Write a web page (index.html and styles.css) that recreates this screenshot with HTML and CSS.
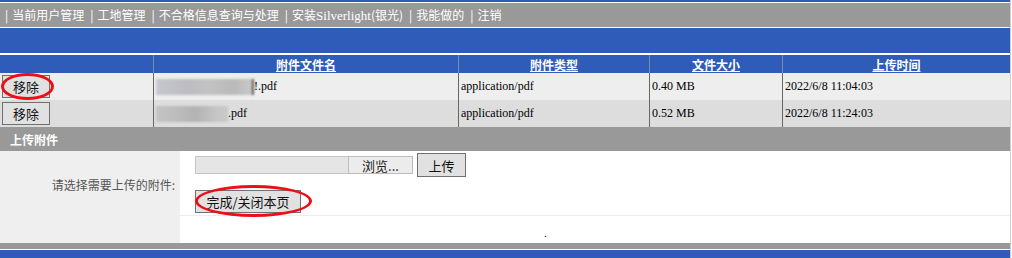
FILE: index.html
```html
<!DOCTYPE html>
<html lang="zh-CN">
<head>
<meta charset="utf-8">
<title>附件管理</title>
<link rel="stylesheet" href="styles.css">
</head>
<body>
<div class="page">
  <div class="topline"></div>
  <nav class="nav">
    <span class="item"><span class="sep">|</span>当前用户管理</span>
    <span class="item"><span class="sep">|</span>工地管理</span>
    <span class="item"><span class="sep">|</span>不合格信息查询与处理</span>
    <span class="item"><span class="sep">|</span>安装<span class="latin">Silverlight</span>(银光)</span>
    <span class="item"><span class="sep">|</span>我能做的</span>
    <span class="item"><span class="sep">|</span>注销</span>
  </nav>
  <div class="banner"></div>

  <div class="files">
    <div class="th"></div>
    <div class="th col"><a>附件文件名</a></div>
    <div class="th col"><a>附件类型</a></div>
    <div class="th col"><a>文件大小</a></div>
    <div class="th col"><a>上传时间</a></div>

    <div class="td r1"><button class="btn rm">移除</button></div>
    <div class="td r1 col"><span class="blur b1"></span>!.pdf</div>
    <div class="td r1 col">application/pdf</div>
    <div class="td r1 col">0.40 MB</div>
    <div class="td r1 col">2022/6/8 11:04:03</div>

    <div class="td r2"><button class="btn rm">移除</button></div>
    <div class="td r2 col"><span class="blur b2"></span>.pdf</div>
    <div class="td r2 col">application/pdf</div>
    <div class="td r2 col">0.52 MB</div>
    <div class="td r2 col">2022/6/8 11:24:03</div>
  </div>

  <div class="section-title">上传附件</div>

  <div class="upload">
    <div class="label">请选择需要上传的附件:</div>
    <div class="controls">
      <div class="filerow">
        <span class="filebox"></span><span class="browse">浏览...</span>
        <button class="btn up">上传</button>
      </div>
      <button class="btn done">完成/关闭本页</button>
    </div>
    <div class="label-empty"></div>
    <div class="extra"><span class="dot">.</span></div>
  </div>

  <div class="footgray"></div>
  <div class="footblue"></div>

  <div class="mark m1"></div>
  <div class="mark m2"></div>
</div>
</body>
</html>
```

FILE: styles.css
```css
* { box-sizing: border-box; }
html, body { margin: 0; padding: 0; background: #fff; }
body { font-family: "Noto Sans CJK SC", "Noto Sans", sans-serif; font-size: 12px; color: #000; }

.page { position: relative; width: 1011px; height: 258px; overflow: hidden; border-right: 1px solid #d0d0d0; }

.topline { height: 2px; background: #2f5cb8; margin-bottom: 1px; }

.nav {
  height: 24px; background: #999; margin-bottom: 1px;
  display: flex; align-items: center; padding-left: 5px;
  color: #fff; font-size: 12px; line-height: 1;
}
.nav .item { display: inline-flex; align-items: center; margin-right: 6px; }
.nav .sep { margin-right: 4px; }
.nav .latin { font-family: "Liberation Serif", serif; font-size: 13px; }

.banner { height: 25px; background: #2f5cb8; margin-bottom: 2px; }

.files {
  display: grid;
  grid-template-columns: 153px 305px 191px 133px 1fr;
  grid-template-rows: 18px 27px 27px;
}
.th {
  background: #2f5cb8; color: #fff; font-weight: bold;
  display: flex; align-items: center; justify-content: center;
}
.th a { text-decoration: underline; }
.col { border-left: 1px solid #666; }
.th.col { border-left-color: #7a8aa8; }
.td {
  display: flex; align-items: center; padding-left: 2px;
  font-family: "Liberation Serif", serif; font-size: 12px;
}
.r1 { background: #eee; }
.r2 { background: #ddd; }

.blur { display: inline-block; height: 16px; filter: blur(1px); }
.b1 { width: 98px; background: linear-gradient(90deg, #c6c8cf, #bdbdc2 30%, #c2c2c2 55%, #bababa 80%, #c8c8c8 97%, #555 99%); }
.b2 { width: 72px; background: linear-gradient(90deg, #c4c4c4, #bcbcbc 30%, #b3b3b3 55%, #c6c6c6 85%, #c9c9c9); }

.btn {
  font-family: "Noto Sans CJK SC", sans-serif; font-size: 13px; color: #111;
  background: #e1e1e1; border: 1px solid #707070; padding: 0; margin: 0;
  line-height: 1; display: inline-flex; align-items: center; justify-content: center;
}
.rm { width: 48px; height: 23px; }

.section-title {
  height: 24px; background: #999; color: #fff; font-weight: bold;
  display: flex; align-items: center; padding-left: 10px;
}

.upload { display: grid; grid-template-columns: 180px 1fr; grid-template-rows: 65px 27px; }
.label {
  background: #efefef; color: #555; font-size: 12px;
  display: flex; align-items: center; justify-content: flex-end; padding-right: 5px;
  padding-top: 1px;
}
.controls { border-bottom: 1px solid #ececec; padding: 2px 0 0 15px; }
.filerow { display: flex; align-items: center; height: 24px; }
.filebox { width: 153px; height: 18px; background: #e5e5e5; border: 1px solid #c6c6c6; border-right: none; }
.browse {
  width: 65px; height: 18px; background: #ececec; border: 1px solid #bdbdbd;
  display: inline-flex; align-items: center; justify-content: center; font-size: 13px; color: #222;
}
.up { width: 49px; height: 24px; margin-left: 4px; }
.done { width: 106px; height: 23px; margin-top: 13px; }
.label-empty { background: #efefef; }
.dot { display: block; padding-left: 364px; font-size: 10px; line-height: 1; padding-top: 12px; }

.footgray { height: 6px; background: #999; margin-bottom: 1px; }
.footblue { height: 8px; background: #2f5cb8; }

.mark { position: absolute; border: 3px solid #ec0f18; border-radius: 50%; }
.m1 { left: 1px; top: 73px; width: 53px; height: 27px; }
.m2 { left: 195px; top: 185px; width: 117px; height: 32px; }
```
